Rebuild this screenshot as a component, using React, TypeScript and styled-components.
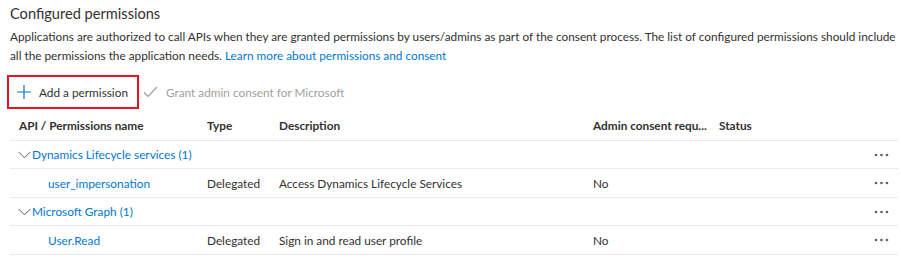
import styled, { createGlobalStyle } from "styled-components";

const GlobalStyle = createGlobalStyle`
  body {
    margin: 0;
    background: #ffffff;
    font-family: Lato, "Open Sans", Arial, sans-serif;
    color: #323130;
  }
`;

const Page = styled.div`
  width: 901px;
  height: 262px;
  padding: 3px 3px 0 10px;
  box-sizing: border-box;
  overflow: hidden;
`;

const Title = styled.h2`
  margin: 0;
  font-size: 14.6px;
  font-weight: 400;
  line-height: 22px;
`;

const Intro = styled.p`
  margin: 2px 0 0;
  font-size: 11.8px;
  line-height: 19px;
  white-space: nowrap;
`;

const Link = styled.a`
  color: #0078d4;
  text-decoration: none;
`;

const Toolbar = styled.div`
  display: flex;
  align-items: center;
  margin: 10px 0 0 -3px;
  height: 34px;
`;

const ToolButton = styled.button<{ $outlined?: boolean; $disabled?: boolean }>`
  display: flex;
  align-items: center;
  gap: 8px;
  height: 34px;
  box-sizing: border-box;
  padding: 0 9px 0 8px;
  border: 2px solid ${(p) => (p.$outlined ? "#e81123" : "transparent")};
  background: none;
  font-family: inherit;
  font-size: 11.8px;
  color: ${(p) => (p.$disabled ? "#a19f9d" : "#323130")};
  cursor: ${(p) => (p.$disabled ? "default" : "pointer")};
`;

const Table = styled.div`
  margin-top: 2px;
  width: 888px;
`;

const Row = styled.div<{ $kind: "header" | "group" | "item" }>`
  display: grid;
  grid-template-columns: 188px 72px 314px 126px 1fr 40px;
  align-items: center;
  box-sizing: border-box;
  height: ${(p) => (p.$kind === "header" ? "30px" : p.$kind === "item" ? "29px" : "28px")};
  border-bottom: 1px solid #edebe9;
  font-size: 11.8px;
  font-weight: ${(p) => (p.$kind === "header" ? 700 : 400)};
`;

const Cell = styled.div<{ $indent?: number; $span?: number }>`
  padding-left: ${(p) => 9 + (p.$indent ?? 0)}px;
  white-space: nowrap;
  overflow: hidden;
  grid-column: ${(p) => (p.$span ? `span ${p.$span}` : "auto")};
`;

const GroupLabel = styled.span`
  display: inline-flex;
  align-items: center;
  gap: 1px;
  margin-left: -1px;
  color: #0078d4;
`;

const More = styled.div`
  display: flex;
  justify-content: flex-end;
  padding-right: 9px;
`;

const PlusIcon = () => (
  <svg width="14" height="14" viewBox="0 0 14 14">
    <path d="M7 0v14M0 7h14" stroke="#0078d4" strokeWidth="1.2" />
  </svg>
);

const CheckIcon = () => (
  <svg width="15" height="12" viewBox="0 0 15 12">
    <path d="M1 6.5l4 4L14 1" stroke="#a19f9d" strokeWidth="1.2" fill="none" />
  </svg>
);

const Chevron = () => (
  <svg width="13" height="8" viewBox="0 0 13 8">
    <path d="M0.5 0.8L6.5 6.8L12.5 0.8" stroke="#605e5c" strokeWidth="1" fill="none" />
  </svg>
);

const Dots = () => (
  <svg width="15" height="4" viewBox="0 0 15 4">
    <circle cx="2" cy="2" r="1.3" fill="#605e5c" />
    <circle cx="7.5" cy="2" r="1.3" fill="#605e5c" />
    <circle cx="13" cy="2" r="1.3" fill="#605e5c" />
  </svg>
);

const groups = [
  {
    api: "Dynamics Lifecycle services (1)",
    perms: [
      {
        name: "user_impersonation",
        type: "Delegated",
        desc: "Access Dynamics Lifecycle Services",
        admin: "No",
      },
    ],
  },
  {
    api: "Microsoft Graph (1)",
    perms: [
      {
        name: "User.Read",
        type: "Delegated",
        desc: "Sign in and read user profile",
        admin: "No",
      },
    ],
  },
];

export default function App() {
  return (
    <Page>
      <GlobalStyle />
      <Title>Configured permissions</Title>
      <Intro>
        Applications are authorized to call APIs when they are granted permissions by users/admins
        as part of the consent process. The list of configured permissions should include
        <br />
        all the permissions the application needs.{" "}
        <Link href="#">Learn more about permissions and consent</Link>
      </Intro>
      <Toolbar>
        <ToolButton $outlined>
          <PlusIcon />
          Add a permission
        </ToolButton>
        <ToolButton $disabled style={{ paddingLeft: 2 }}>
          <CheckIcon />
          Grant admin consent for Microsoft
        </ToolButton>
      </Toolbar>
      <Table>
        <Row $kind="header">
          <Cell>API / Permissions name</Cell>
          <Cell>Type</Cell>
          <Cell>Description</Cell>
          <Cell>Admin consent requ...</Cell>
          <Cell>Status</Cell>
          <Cell />
        </Row>
        {groups.map((g) => (
          <div key={g.api}>
            <Row $kind="group">
              <Cell $span={5}>
                <GroupLabel>
                  <Chevron />
                  {g.api}
                </GroupLabel>
              </Cell>
              <More>
                <Dots />
              </More>
            </Row>
            {g.perms.map((p) => (
              <Row $kind="item" key={p.name}>
                <Cell $indent={29}>
                  <Link href="#">{p.name}</Link>
                </Cell>
                <Cell>{p.type}</Cell>
                <Cell>{p.desc}</Cell>
                <Cell>{p.admin}</Cell>
                <Cell />
                <More>
                  <Dots />
                </More>
              </Row>
            ))}
          </div>
        ))}
      </Table>
    </Page>
  );
}
